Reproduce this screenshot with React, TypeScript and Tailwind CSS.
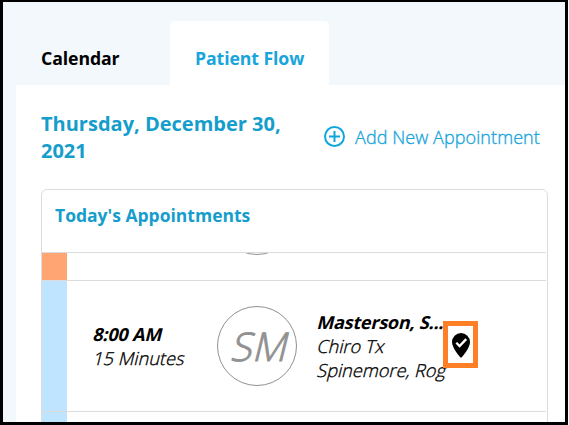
function Row({ children, className }: { children?: React.ReactNode; className: string }) {
  return <div className={`relative flex w-[504px] shrink-0 border-b border-[#dcdcdc] ${className}`}>{children}</div>;
}

function AddIcon() {
  return (
    <svg className="mr-[10px] h-[22px] w-[22px] shrink-0" viewBox="0 0 22 22" fill="none" stroke="#0fa6dc" strokeWidth="2">
      <circle cx="11.500" cy="10.500" r="9.5" />
      <path d="M11.500 5v11M6 10.500h11" />
    </svg>
  );
}

function PinCheckIcon() {
  return (
    <svg className="mt-px h-[25px] w-[18px]" viewBox="0 0 18 25">
      <path d="M9 0a9 9 0 0 0-9 9c0 6.500 9 16 9 16s9-9.500 9-16a9 9 0 0 0-9-9z" fill="#000" />
      <path d="M4.300 9.800l3.300 3.300 6.600-7" fill="none" stroke="#fff" strokeWidth="2.300" />
    </svg>
  );
}

// Slanted upright letters, one line each, so that every line leans about its own middle.
function Slanted({ children, className = "font-light tracking-[0.070px] [-webkit-text-stroke:0.350px]" }: { children: React.ReactNode; className?: string }) {
  return <div className={`w-max -skew-x-[14deg] ${className}`}>{children}</div>;
}

export default function App() {
  return (
    <div className="h-[425px] w-[568px] overflow-hidden border-t-2 border-r-[3px] border-b-[3px] border-l-[3px] border-black bg-[#f3f8fc] font-['Open_Sans','Noto_Sans',sans-serif] text-black">
      <nav className="flex h-[83px] items-end text-[17.700px] leading-[25px] font-bold">
        <div className="h-16 w-[167px] pt-[25px] pl-[38px] tracking-[-0.100px]">Calendar</div>
        <div className="h-16 w-[159px] rounded-t-[5px] bg-white pt-[25px] pl-[25px] tracking-[-0.100px] text-[#18a5dc]">Patient Flow</div>
      </nav>
      <main className="ml-[13px] h-[337px] overflow-hidden bg-white pl-[25px]">
        <header className="flex h-[104px] pt-[25px]">
          <h1 className="w-[282px] text-[20px] leading-[27px] font-bold text-[#159dcb]">
            Thursday, December 30,
            <br />
            2021
          </h1>
          <button className="flex h-[54px] items-center text-[18px] font-light whitespace-nowrap text-[#18a5dc]">
            <AddIcon />
            <span className="leading-[25px] tracking-[0.080px] [-webkit-text-stroke:0.350px]">Add New Appointment</span>
          </button>
        </header>
        <section className="flex h-[260px] w-[507px] flex-col rounded-t-[6px] border border-[#dcdcdc]">
          <Row className="h-[63px]">
            <h2 className="pt-[13px] pl-[13px] text-[17.500px] leading-[25px] font-bold text-[#159dcb]">Today's Appointments</h2>
          </Row>
          <Row className="h-[28px] overflow-hidden">
            <div className="w-[25px] bg-[#ffa573]" />
            <div className="-mt-[78px] ml-[150px] h-20 w-20 rounded-full border border-[#919191]" />
          </Row>
          <Row className="h-[131px]">
            <div className="w-[25px] bg-[#bfe4ff]" />
            <div className="w-[150px] pt-[41px] pl-[27px] text-[18px] leading-[24px]">
              <Slanted className="font-bold tracking-[-0.200px]">8:00 AM</Slanted>
              <Slanted>15 Minutes</Slanted>
            </div>
            <div className="mt-[25px] flex h-20 w-20 items-center justify-center rounded-full border border-[#919191] pt-[2px] pl-[9px] text-[39.500px] text-[#919191]">
              <Slanted className="font-light tracking-[0.500px] [-webkit-text-stroke:0.900px]">SM</Slanted>
            </div>
            <div className="w-[150px] pt-[29px] pl-[21px] text-[18px] leading-[24px] whitespace-nowrap">
              <Slanted className="font-bold tracking-[-0.250px]">Masterson, S...</Slanted>
              <Slanted>Chiro Tx</Slanted>
              <Slanted>Spinemore, Rog</Slanted>
            </div>
            <div className="absolute top-[40px] left-[401px] flex h-[47px] w-[35px] items-center justify-center border-[5px] border-[#ff7f27] bg-white">
              <PinCheckIcon />
            </div>
          </Row>
          <div className="h-[37px] w-[25px] bg-[#bfe4ff]" />
        </section>
      </main>
    </div>
  );
}
